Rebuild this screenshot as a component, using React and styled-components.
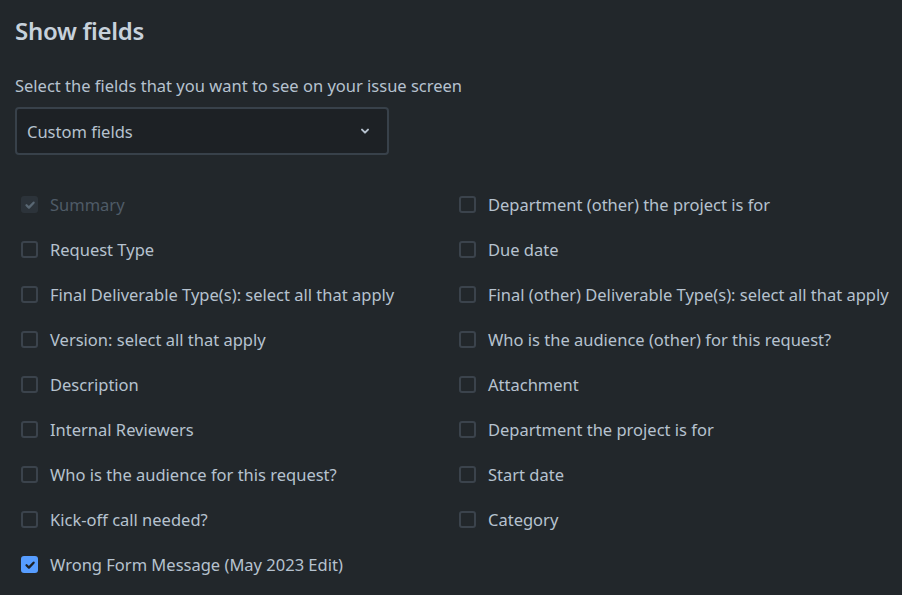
import React from "react";
import styled, { createGlobalStyle } from "styled-components";

const Global = createGlobalStyle`
  html, body { margin: 0; padding: 0; background: #22272b; }
  body { font-family: "Segoe UI", "Noto Sans", "Open Sans", sans-serif; color: #b6c2cf; }
`;

const Page = styled.div`
  width: 902px;
  height: 595px;
  box-sizing: border-box;
  padding: 14px 15px 0 15px;
  background: #22272b;
  overflow: hidden;
`;

const Title = styled.h2`
  margin: 0;
  font-size: 24px;
  line-height: 34px;
  font-weight: 600;
  color: #c7d1db;
  letter-spacing: -0.3px;
`;

const Subtitle = styled.p`
  margin: 28px 0 0 0;
  font-size: 16.5px;
  line-height: 20px;
  color: #b6c2cf;
`;

const Select = styled.div`
  margin-top: 11px;
  width: 374px;
  height: 48px;
  box-sizing: border-box;
  border: 2px solid #38414a;
  border-radius: 4px;
  background: #1d2125;
  display: flex;
  align-items: center;
  justify-content: space-between;
  padding: 0 16px 0 10px;
  font-size: 16.5px;
  color: #b6c2cf;
`;

const Grid = styled.div`
  margin-top: 27px;
  display: grid;
  grid-template-columns: 438px 1fr;
  grid-template-rows: repeat(9, 45px);
  grid-auto-flow: column;
`;

const Row = styled.label`
  display: flex;
  align-items: center;
  gap: 12px;
  padding-left: 6px;
  height: 45px;
  font-size: 16.5px;
  color: ${p => (p.$disabled ? "#4f5b67" : "#b6c2cf")};
  white-space: nowrap;
`;

const Box = styled.span`
  width: 17px;
  height: 17px;
  box-sizing: border-box;
  border-radius: 3px;
  display: flex;
  align-items: center;
  justify-content: center;
  flex: none;
  border: ${p => (p.$checked || p.$disabled ? "none" : "2px solid #3b434c")};
  background: ${p => (p.$disabled ? "#2c333a" : p.$checked ? "#579dff" : "#22272b")};
  color: ${p => (p.$disabled ? "#596773" : "#1d2125")};
`;

const Check = () => (
  <svg width="12" height="12" viewBox="0 0 12 12">
    <path d="M2.5 6.2l2.4 2.4 4.7-4.9" fill="none" stroke="currentColor" strokeWidth="2.3" strokeLinecap="round" strokeLinejoin="round" />
  </svg>
);

const Chevron = () => (
  <svg width="12" height="12" viewBox="0 0 12 12">
    <path d="M3 4.6l3 3 3-3" fill="none" stroke="#b6c2cf" strokeWidth="2" strokeLinecap="round" strokeLinejoin="round" />
  </svg>
);

const fields = [
  { label: "Summary", disabled: true, checked: true },
  { label: "Request Type" },
  { label: "Final Deliverable Type(s): select all that apply" },
  { label: "Version: select all that apply" },
  { label: "Description" },
  { label: "Internal Reviewers" },
  { label: "Who is the audience for this request?" },
  { label: "Kick-off call needed?" },
  { label: "Wrong Form Message (May 2023 Edit)", checked: true },
  { label: "Department (other) the project is for" },
  { label: "Due date" },
  { label: "Final (other) Deliverable Type(s): select all that apply" },
  { label: "Who is the audience (other) for this request?" },
  { label: "Attachment" },
  { label: "Department the project is for" },
  { label: "Start date" },
  { label: "Category" },
];

export default function App() {
  return (
    <Page>
      <Global />
      <Title>Show fields</Title>
      <Subtitle>Select the fields that you want to see on your issue screen</Subtitle>
      <Select>
        <span>Custom fields</span>
        <Chevron />
      </Select>
      <Grid>
        {fields.map(f => (
          <Row key={f.label} $disabled={f.disabled}>
            <Box $checked={f.checked} $disabled={f.disabled}>
              {f.checked && <Check />}
            </Box>
            {f.label}
          </Row>
        ))}
      </Grid>
    </Page>
  );
}
